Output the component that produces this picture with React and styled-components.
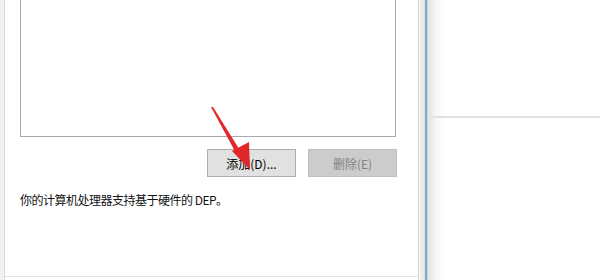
import styled, { createGlobalStyle } from "styled-components";

const Global = createGlobalStyle`
  html, body {
    margin: 0;
    padding: 0;
    background: #ffffff;
    font-family: "Noto Sans CJK SC", "Noto Sans", sans-serif;
  }
`;

const Page = styled.div`
  position: relative;
  width: 600px;
  height: 280px;
  display: flex;
  overflow: hidden;
  background: #ffffff;
`;

const LeftEdge = styled.div`
  width: 4px;
  background: #f0f0f0;
  border-right: 1px solid #dcdcdc;
`;

const Panel = styled.div`
  width: 398px;
  height: 276px;
  padding: 0 0 0 15px;
  background: #ffffff;
  border-bottom: 1px solid #e2e2e2;
  display: flex;
  flex-direction: column;
`;

const ListBox = styled.div`
  width: 374px;
  height: 136px;
  background: #ffffff;
  border: 1px solid #a9a9a9;
  border-top: none;
`;

const ButtonRow = styled.div`
  width: 377px;
  display: flex;
  justify-content: flex-end;
  gap: 12px;
  margin-top: 12px;
`;

const Button = styled.div`
  width: 87px;
  height: 26px;
  display: flex;
  align-items: center;
  justify-content: center;
  font-size: 12px;
  background: ${(p) => (p.disabled ? "#cccccc" : "#e1e1e1")};
  border: 1px solid ${(p) => (p.disabled ? "#bfbfbf" : "#adadad")};
  color: ${(p) => (p.disabled ? "#838383" : "#000000")};
`;

const Info = styled.p`
  margin: 15px 0 0;
  font-size: 12px;
  letter-spacing: -0.5px;
  line-height: 16px;
  color: #111111;
`;

const Frame = styled.div`
  width: 12px;
  display: flex;
`;

const Stripe = styled.div`
  width: ${(p) => p.w}px;
  background: ${(p) => p.c};
`;

const Desktop = styled.div`
  flex: 1;
  background: linear-gradient(to right, #e6e6e6 0px, #f6f6f6 6px, #ffffff 16px);
  display: flex;
  flex-direction: column;
`;

const Rule = styled.div`
  margin-top: 116px;
  height: 2px;
  background: #e2e2e2;
`;

const Arrow = styled.svg`
  position: absolute;
  left: 0;
  top: 0;
  pointer-events: none;
`;

export default function App() {
  return (
    <>
      <Global />
      <Page>
        <LeftEdge />
        <Panel>
          <ListBox />
          <ButtonRow>
            <Button>添加(D)...</Button>
            <Button disabled>删除(E)</Button>
          </ButtonRow>
          <Info>你的计算机处理器支持基于硬件的 DEP。</Info>
        </Panel>
        <Frame>
          <Stripe w={1} c="#d8d8d8" />
          <Stripe w={2} c="#f4f2ec" />
          <Stripe w={3} c="#ece9e2" />
          <Stripe w={1} c="#cfe4ee" />
          <Stripe w={2} c="#86abc0" />
          <Stripe w={1} c="#b9d3e0" />
          <Stripe w={2} c="#e8e8e8" />
        </Frame>
        <Desktop>
          <Rule />
        </Desktop>
        <Arrow width="600" height="280" viewBox="0 0 600 280">
          <polygon points="211,107 213,107 241,152 237,155" fill="#e0282a" />
          <polygon points="232,151 249,142 250,170" fill="#e0282a" />
        </Arrow>
      </Page>
    </>
  );
}
